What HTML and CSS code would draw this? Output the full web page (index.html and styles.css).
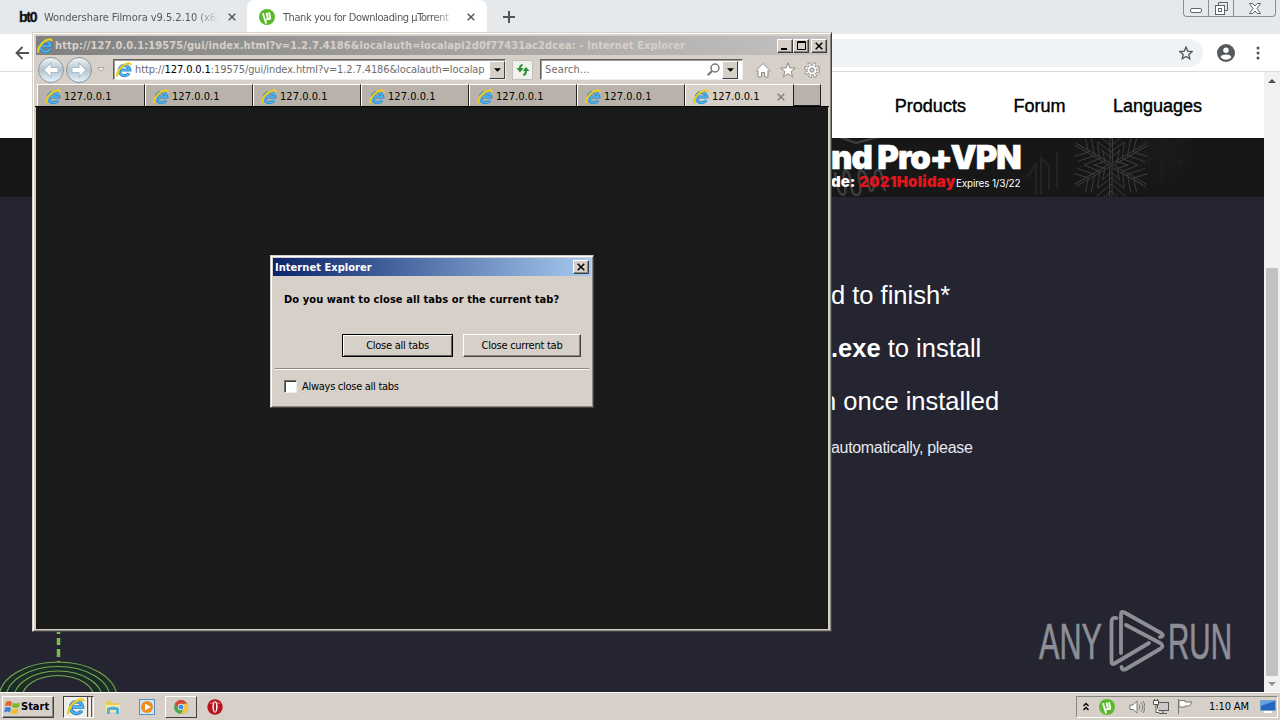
FILE: index.html
```html
<!DOCTYPE html>
<html lang="en">
<head>
    <meta charset="UTF-8">
    <meta name="viewport" content="width=device-width, initial-scale=1.0">
    <title>Thank you for Downloading µTorrent</title>
    <link rel="stylesheet" href="styles.css">
</head>
<body>
    <svg class="sprites" width="0" height="0">
        <symbol id="ie" viewBox="0 0 16 16">
            <path d="M13 11.200a5.200 5.200 0 1 1 .7-3.200H5" fill="none" stroke="#2583cc" stroke-width="3.200"/>
            <path d="M13 11.200a5.200 5.200 0 1 1 .7-3.200H5" fill="none" stroke="#55b8ee" stroke-width="1.600"/>
            <path d="M1.500 14.500C.2 11.500 3.500 5.500 8.300 2.700 11.500.9 14.800.6 14.600 3.200" fill="none" stroke="#efcb1d" stroke-width="2.200"/>
        </symbol>
        <symbol id="ut" viewBox="0 0 16 16">
            <circle cx="8" cy="8" r="8" fill="#5cb82c"/>
            <path d="M4 4.200l1.500 5.200c.6 1.900 3.600 1.500 3.200-.6L7.500 3.700M8.700 8.800c.5 2 3 1.500 2.500-.5L9.900 3.200M5.800 10l1.300 4.500" fill="none" stroke="#fff" stroke-width="1.800"/>
        </symbol>
        <symbol id="x" viewBox="0 0 8 8">
            <path d="M.7.7l6.600 6.600M7.300.7L.7 7.300" fill="none" stroke="currentColor" stroke-width="1.500"/>
        </symbol>
        <symbol id="down" viewBox="0 0 8 4">
            <path d="M0 0h8L4 4z" fill="currentColor"/>
        </symbol>
    </svg>

    <div class="desktop">
        <!-- Chrome -->
        <div class="chrome">
            <div class="tabstrip">
                <div class="tab tab-first">
                    <span class="bt-icon">bt0</span>
                    <span class="tab-title">Wondershare Filmora v9.5.2.10 (x64</span>
                    <svg class="tab-close"><use href="#x"/></svg>
                </div>
                <div class="tab tab-active">
                    <svg class="tab-icon"><use href="#ut"/></svg>
                    <span class="tab-title tab-title-active">Thank you for Downloading µTorrent</span>
                    <svg class="tab-close"><use href="#x"/></svg>
                </div>
                <svg class="tab-new" viewBox="0 0 12 12"><path d="M6 0v12M0 6h12" stroke="#505357" stroke-width="2"/></svg>
                <div class="win-controls">
                    <span class="wc wc-min"><svg width="12" height="5"><rect x=".5" y=".5" width="11" height="4" rx="1.500" fill="#fff" stroke="#5b6370"/></svg></span>
                    <span class="wc wc-max"><svg width="13" height="13" fill="none" stroke="#5b6370"><path d="M3.500 3V.5h9v8H10"/><rect x=".5" y="3.500" width="9" height="9" fill="#fff"/><rect x="3.500" y="6.500" width="3" height="3"/></svg></span>
                    <span class="wc wc-close"><svg width="12" height="11" fill="#fff" stroke="#5b6370"><path d="M.5.5h3.200L6 3 8.300.5h3.200L8 5.500l3.500 5H8.300L6 8l-2.300 2.500H.5l3.500-5z"/></svg></span>
                </div>
            </div>
            <div class="toolbar">
                <svg class="back" viewBox="0 0 14 14"><path d="M14 7H1.500M7.500 1L1.500 7l6 6" fill="none" stroke="#505357" stroke-width="1.800"/></svg>
                <div class="omnibox">
                    <svg width="14" height="14" viewBox="0 0 14 14"><path d="M7 1l1.700 4.100 4.500.4-3.400 2.900 1 4.400L7 10.500l-3.800 2.300 1-4.400L.8 5.500l4.500-.4z" fill="none" stroke="#505357" stroke-width="1.300"/></svg>
                </div>
                <svg class="avatar" viewBox="0 0 18 18"><circle cx="9" cy="9" r="9" fill="#55585c"/><circle cx="9" cy="6.300" r="2.700" fill="#fff"/><path d="M3.600 13c1.500-3.200 9.300-3.200 10.800 0-2.200 3.600-8.600 3.600-10.800 0z" fill="#fff"/></svg>
                <svg class="menu-dots" viewBox="0 0 4 14" fill="#505357"><circle cx="2" cy="2" r="1.500"/><circle cx="2" cy="7" r="1.500"/><circle cx="2" cy="12" r="1.500"/></svg>
            </div>
            <div class="viewport">
                <div class="page">
                    <div class="site-nav">
                        <span>Products</span>
                        <span>Forum</span>
                        <span>Languages</span>
                    </div>
                    <div class="promo">
                        <svg class="flakes" viewBox="0 0 433 59" fill="none" stroke="#3c3c3c">
                            <g id="flake" stroke-width="1">
                                <g id="arm"><path d="M279 27V-14M281.500 24V-14M280 20l-9-8M280 20l9-8M280 14l-13-10M280 14l13-10M280 8L266-4M280 8l14-12M280 1L269-9M280 1l11-10"/></g>
                                <use href="#arm" transform="rotate(60 280 27)"/>
                                <use href="#arm" transform="rotate(120 280 27)"/>
                                <use href="#arm" transform="rotate(180 280 27)"/>
                                <use href="#arm" transform="rotate(240 280 27)"/>
                                <use href="#arm" transform="rotate(300 280 27)"/>
                            </g>
                            <use href="#flake" transform="translate(135 -5) scale(.7)" opacity=".25"/>
                            <path d="M0-4l25 9L58-4M4 34q2 22 8 23c7-2-4-25 3-24s2 25 11 24-3-23 4-24 7 22 11 20 0-21 6-21 4 21 8 20" stroke-width="2.500"/>
                            <path d="M195 40l10-14v30M210 56V20l8 8v24M226 50V14" stroke-width="2" opacity=".35"/>
                        </svg>
                        <div class="promo-title">nd Pro+VPN</div>
                        <div class="promo-line"><b class="promo-code">de:</b><b class="promo-red">2021Holiday</b><span class="promo-exp">Expires 1/3/22</span></div>
                    </div>
                    <div class="hero">
                        <p class="step step-1">d to finish*</p>
                        <p class="step step-2"><b>.exe</b> to install</p>
                        <p class="step step-3">n once installed</p>
                        <p class="note">automatically, please</p>
                        <svg class="rings" viewBox="0 0 120 62" fill="none" stroke="#76a850" stroke-width="1.200">
                            <path d="M58.500 2v30" stroke="#7fb84c" stroke-width="3.500" stroke-dasharray="2 4 7 4 8 4"/>
                            <ellipse cx="58" cy="68" rx="59" ry="36" fill="#1c2c26"/>
                            <ellipse cx="58" cy="68" rx="52" ry="31.500"/>
                            <ellipse cx="58" cy="68" rx="44" ry="27"/>
                            <ellipse cx="58" cy="68" rx="36" ry="22.500" fill="#242531"/>
                        </svg>
                        <svg class="watermark" viewBox="0 0 200 64">
                            <g fill="#8d8e96" stroke="#8d8e96" stroke-width=".7" font-family="Liberation Sans" font-size="50">
                                <text x="1" y="50" textLength="63" lengthAdjust="spacingAndGlyphs">ANY</text>
                                <text x="130" y="50" textLength="64" lengthAdjust="spacingAndGlyphs">RUN</text>
                            </g>
                            <g fill="none" stroke="#8d8e96" stroke-width="3.800" stroke-linecap="round" stroke-linejoin="round">
                                <path d="M78.500 9q-5-1-5 4v40q0 3 3 1.500L111 34"/>
                                <path d="M83 44V5.500q0-4 3.500-2L123 24q4 3-1 4"/>
                                <path d="M88 16l34 18q5 3 0 6L88 60q-4 2-4.500-2"/>
                            </g>
                        </svg>
                    </div>
                </div>
                <div class="scrollbar">
                    <svg class="sb-arrow sb-up"><use href="#down"/></svg>
                    <div class="sb-thumb"></div>
                    <svg class="sb-arrow sb-down"><use href="#down"/></svg>
                </div>
            </div>
        </div>

        <!-- Taskbar -->
        <div class="taskbar">
            <div class="start">
                <svg width="17" height="16" viewBox="0 0 17 16"><path d="M2 3q3-2 6 0L7 7.500q-3-2-6 0z" fill="#e8602c"/><path d="M9 3.500q3 2 7 0L15 8q-4 2-7 0z" fill="#7cb82f"/><path d="M1 9q3-2 6 0l-1 4.500q-3-2-6 0z" fill="#3a7fd8"/><path d="M8 9.500q3 2 6.500 0l-1 4.500q-4 2-6.500 0z" fill="#f4bd20"/></svg>
                <b>Start</b>
            </div>
            <div class="task task-ie">
                <svg width="18" height="18"><use href="#ie"/></svg>
                <i></i><i></i>
            </div>
            <svg class="ql ql-folder" viewBox="0 0 16 16"><path d="M1 2h5l1 2h7v9H1z" fill="#e8c95c"/><path d="M1 6h14v7H1z" fill="#f7e8a0"/><path d="M2 9q6-3 12 0v6h-3v-4H5v4H2z" fill="#56aedb"/></svg>
            <svg class="ql ql-media" viewBox="0 0 16 16"><rect x=".5" y=".5" width="15" height="15" fill="#cfe6f7" stroke="#5590c8"/><circle cx="8" cy="8" r="6" fill="#f08a1c"/><path d="M6 4.500L12 8l-6 3.500z" fill="#fff"/></svg>
            <div class="task task-chrome">
                <svg width="14" height="14" viewBox="0 0 14 14"><circle cx="7" cy="7" r="7" fill="#4aa850"/><path d="M1 3.500A7 7 0 0 1 13.100 3.700H7L4 8.700z" fill="#dc4437"/><path d="M13.100 3.700A7 7 0 0 1 6.600 14L10 8.800 9.500 3.700z" fill="#f9ca35"/><circle cx="7" cy="7" r="3.200" fill="#fff"/><circle cx="7" cy="7" r="2.500" fill="#4483e8"/></svg>
            </div>
            <svg class="ql ql-opera" viewBox="0 0 16 16"><circle cx="8" cy="8" r="7.700" fill="#b81420"/><path d="M2 5a7 5 0 0 1 12 0" fill="#dc5a5a"/><ellipse cx="8" cy="8" rx="2.600" ry="5.700" fill="#fff"/><ellipse cx="8" cy="8" rx="1.100" ry="4.700" fill="#b81420"/></svg>
            <div class="tray">
                <svg class="tray-more" viewBox="0 0 6 9"><path d="M.5 4L3 1.500 5.500 4M.5 8L3 5.500 5.500 8" fill="none" stroke="#000" stroke-width="1.400"/></svg>
                <svg class="tray-ut"><use href="#ut"/></svg>
                <svg class="tray-sound" viewBox="0 0 16 14" fill="none" stroke="#777"><path d="M1 5h3l4-4v12L4 9.500H1z" fill="#fff"/><path d="M10 4.500q2 2.500 0 5M12 2.500q4 4.500 0 9M14 1q4 6 0 12"/></svg>
                <svg class="tray-net" viewBox="0 0 16 15" fill="none" stroke="#555"><rect x="4.500" y="3.500" width="11" height="8" fill="#c9c9c9"/><path d="M6 14.500h8M10 12v2"/><path d="M.5 1.500h5v4h-5zM3 6v7.500h3M1.500 0v2M4.500 0v2" fill="#fff"/></svg>
                <svg class="tray-flag" viewBox="0 0 16 15" fill="#fff" stroke="#777"><path d="M1.500 0v15"/><path d="M2 1.500h6v1.500h7l-2.500 4H8V8H2z"/></svg>
                <span class="clock">1:10 AM</span>
                <svg class="tray-desk" viewBox="0 0 16 13"><rect x=".5" y=".5" width="15" height="10" fill="#2468c0" stroke="#7fa4cc"/><path d="M1 1h14L1 6z" fill="#5ba3e4"/><path d="M4 12h8" stroke="#fff" stroke-width="2"/></svg>
            </div>
        </div>

        <!-- Internet Explorer -->
        <div class="ie-window">
            <div class="ie-title">
                <svg class="ie-icon"><use href="#ie"/></svg>
                <span class="ie-caption">http://127.0.0.1:19575/gui/index.html?v=1.2.7.4186&amp;localauth=localapi2d0f77431ac2dcea: - Internet Explorer</span>
                <div class="ie-buttons">
                    <span class="cap-btn"><svg width="8" height="8"><path d="M0 7h6" stroke="#000" stroke-width="2"/></svg></span>
                    <span class="cap-btn"><svg width="9" height="9" fill="none" stroke="#000"><path d="M.5.5h8v8h-8zM0 1.500h9"/></svg></span>
                    <span class="cap-btn cap-close"><svg width="8" height="8"><use href="#x"/></svg></span>
                </div>
            </div>
            <div class="ie-toolbar">
                <span class="round"><svg viewBox="0 0 14 14"><path d="M7 1.500L1.500 7 7 12.500V9h5.500V5H7z" fill="#fff" stroke="#a9bcc8" stroke-width=".8"/></svg></span>
                <span class="round"><svg viewBox="0 0 14 14"><path d="M7 1.500L12.500 7 7 12.500V9H1.500V5H7z" fill="#fff" stroke="#a9bcc8" stroke-width=".8"/></svg></span>
                <svg class="history" viewBox="0 0 8 5"><path d="M.7.5h6.600L4 4.300z" fill="#eee" stroke="#aaa5a0"/></svg>
                <div class="field address">
                    <svg class="ie-icon"><use href="#ie"/></svg>
                    <span class="url">http://<em>127.0.0.1</em>:19575/gui/index.html?v=1.2.7.4186&amp;localauth=localap</span>
                    <span class="drop"><svg><use href="#down"/></svg></span>
                </div>
                <span class="refresh"><svg width="16" height="14" viewBox="0 0 16 14" fill="#31913a"><path d="M7.500 1Q4 1.500 4 5H1.500L5 9.500 8.500 5H6q0-2 2-2.500z"/><path d="M8.500 13q3.500-.5 3.500-5h2.500L11 4 7.500 8H10q0 2.500-2 3z"/></svg></span>
                <div class="field search">
                    <span class="placeholder">Search...</span>
                    <svg class="glass" viewBox="0 0 13 13" fill="none" stroke="#777" stroke-width="1.500"><circle cx="8" cy="5" r="4"/><path d="M5 8L.7 12.300" stroke-width="2"/></svg>
                    <span class="drop"><svg><use href="#down"/></svg></span>
                </div>
                <svg class="tool tool-home" viewBox="0 0 16 16" fill="#fff" stroke="#8e8a86"><path d="M8 1.500l7 7-1 1-1-1V15H9.500v-4.500h-3V15H3V8.500l-1 1-1-1z"/></svg>
                <svg class="tool tool-star" viewBox="0 0 16 16" fill="#fff" stroke="#8e8a86"><path d="M8 .8l1.900 5.100 5.400.2-4.200 3.400 1.500 5.200L8 11.700l-4.600 3 1.500-5.200L.7 6.100l5.400-.2z"/></svg>
                <svg class="tool" viewBox="0 0 16 16" fill="none"><circle cx="8" cy="8" r="6.300" stroke="#8e8a86" stroke-width="3.200" stroke-dasharray="3 1.950"/><circle cx="8" cy="8" r="5" fill="#fff" stroke="#8e8a86"/><circle cx="8" cy="8" r="5.800" stroke="#fff" stroke-width="2.200" stroke-dasharray="1.800 2.755" stroke-dashoffset="-.5"/><circle cx="8" cy="8" r="2.200" fill="#d4cfc9" stroke="#8e8a86"/></svg>
            </div>
            <div class="ie-tabs">
                <div class="ie-tab"><svg class="ie-icon"><use href="#ie"/></svg><span>127.0.0.1</span></div>
                <div class="ie-tab"><svg class="ie-icon"><use href="#ie"/></svg><span>127.0.0.1</span></div>
                <div class="ie-tab"><svg class="ie-icon"><use href="#ie"/></svg><span>127.0.0.1</span></div>
                <div class="ie-tab"><svg class="ie-icon"><use href="#ie"/></svg><span>127.0.0.1</span></div>
                <div class="ie-tab"><svg class="ie-icon"><use href="#ie"/></svg><span>127.0.0.1</span></div>
                <div class="ie-tab"><svg class="ie-icon"><use href="#ie"/></svg><span>127.0.0.1</span></div>
                <div class="ie-tab ie-current"><svg class="ie-icon"><use href="#ie"/></svg><span>127.0.0.1</span><svg class="ie-x"><use href="#x"/></svg></div>
                <div class="ie-newtab"></div>
            </div>
            <div class="ie-page"></div>
        </div>

        <!-- Dialog -->
        <div class="dialog">
            <div class="dialog-title">
                <b>Internet Explorer</b>
                <span class="cap-btn"><svg width="8" height="8"><use href="#x"/></svg></span>
            </div>
            <p class="question">Do you want to close all tabs or the current tab?</p>
            <div class="dialog-actions">
                <button class="btn btn-default"><span>Close all tabs</span></button>
                <button class="btn btn-current"><span>Close current tab</span></button>
            </div>
            <div class="dialog-footer">
                <span class="checkbox"></span>
                <span class="always">Always close all tabs</span>
            </div>
        </div>
    </div>
</body>
</html>
```
FILE: styles.css
```css
* {
    margin: 0;
    padding: 0;
    box-sizing: border-box;
}

body {
    overflow: hidden;
    font-family: "DejaVu Sans Condensed", "DejaVu Sans", sans-serif;
    font-stretch: condensed;
    font-size: 11px;
    color: #000;
}

svg {
    display: block;
    flex: none;
}

span, b, p {
    white-space: nowrap;
}

.sprites {
    position: absolute;
}

.desktop {
    position: relative;
    width: 1280px;
    height: 720px;
    overflow: hidden;
    display: flex;
    flex-direction: column;
}

/* Chrome window */
.chrome {
    flex: 1;
    min-height: 0;
    display: flex;
    flex-direction: column;
}

.tabstrip {
    height: 34px;
    display: flex;
    background: #e5e9ec;
}

.tab {
    display: flex;
    align-items: center;
    height: 34px;
    color: #55585c;
}

.tab-first {
    width: 247px;
    padding-left: 19px;
}

.tab-active {
    width: 240px;
    padding-left: 12px;
    background: #fff;
    border-radius: 8px 8px 0 0;
}

.bt-icon {
    width: 25px;
    font: bold 14px "Liberation Sans", sans-serif;
    letter-spacing: -1.2px;
    color: #111;
    -webkit-text-stroke: 0.3px #111;
}

.tab-icon {
    width: 16px;
    height: 16px;
    margin-right: 8px;
}

.tab-title {
    width: 175px;
    overflow: hidden;
    letter-spacing: -0.05px;
    -webkit-mask-image: linear-gradient(to right, #000 150px, transparent 175px);
    mask-image: linear-gradient(to right, #000 150px, transparent 175px);
}

.tab-title-active {
    letter-spacing: -0.42px;
}

.tab-close {
    width: 8px;
    height: 8px;
    margin-left: 9px;
}

.tab-new {
    width: 12px;
    height: 12px;
    margin: 11px 0 0 16px;
}

.win-controls {
    display: flex;
    width: 93px;
    height: 17px;
    margin-left: auto;
    margin-right: 4px;
    border: 1px solid #8b8f94;
    border-top: 0;
    border-radius: 0 0 4px 4px;
}

.wc {
    display: flex;
    justify-content: center;
    width: 25px;
    padding-top: 2px;
    border-right: 1px solid #8b8f94;
}

.wc-min {
    padding-top: 8px;
}

.wc-close {
    flex: 1;
    border-right: 0;
    padding-top: 3px;
}

.toolbar {
    height: 38px;
    display: flex;
    align-items: center;
    background: #fff;
    border-bottom: 1px solid #d8dadc;
}

.back {
    width: 14px;
    height: 14px;
    margin-left: 15px;
}

.omnibox {
    width: 1073px;
    height: 28px;
    margin-left: 101px;
    padding-right: 10px;
    display: flex;
    align-items: center;
    justify-content: flex-end;
    background: #f0f3f5;
    border-radius: 14px;
}

.avatar {
    width: 18px;
    height: 18px;
    margin-left: 14px;
}

.menu-dots {
    width: 4px;
    height: 14px;
    margin-left: 21px;
}

.viewport {
    flex: 1;
    min-height: 0;
    display: flex;
}

.page {
    width: 1264px;
    display: flex;
    flex-direction: column;
}

.site-nav {
    height: 66px;
    padding: 2px 62px 0 0;
    display: flex;
    justify-content: flex-end;
    align-items: center;
    gap: 47.5px;
    background: #fff;
    font: 18px "Liberation Sans", sans-serif;
    -webkit-text-stroke: 0.4px #000;
}

.promo {
    position: relative;
    height: 59px;
    padding: 2px 0 0 831px;
    overflow: hidden;
    background: #171717;
    color: #fff;
    font-family: "Inter", "Liberation Sans", sans-serif;
    font-stretch: normal;
}

.flakes {
    position: absolute;
    left: 831px;
    top: 0;
    width: 433px;
    height: 59px;
}

.promo-title {
    position: relative;
    height: 34px;
    line-height: 34px;
    font-size: 33px;
    font-weight: 900;
    letter-spacing: -1px;
    -webkit-text-stroke: 0.6px #fff;
}

.promo-line {
    position: relative;
    display: flex;
    align-items: baseline;
    height: 16px;
    line-height: 16px;
    font-size: 15px;
}

.promo-code,
.promo-red {
    font-weight: 900;
}

.promo-code {
    width: 28px;
}

.promo-red {
    width: 97px;
    color: #e0161c;
    letter-spacing: 0.2px;
}

.promo-exp {
    font-size: 10px;
    letter-spacing: -0.2px;
}

.hero {
    position: relative;
    flex: 1;
    padding: 82px 0 0 831px;
    background: #242531;
    color: #fff;
    font-family: "Liberation Sans", sans-serif;
}

.step {
    height: 53px;
    line-height: 32px;
    font-size: 25.5px;
}

.step-3 {
    margin-left: -9px;
    height: 44px;
}

.note {
    font-size: 16px;
    line-height: 38px;
    letter-spacing: -0.32px;
    color: #e8e8ee;
}

.rings {
    position: absolute;
    left: 0;
    bottom: 0;
    width: 120px;
    height: 62px;
}

.watermark {
    position: absolute;
    left: 1038px;
    bottom: 19px;
    width: 200px;
    height: 64px;
}

.scrollbar {
    width: 16px;
    display: flex;
    flex-direction: column;
    align-items: center;
    background: #f1f1f1;
}

.sb-arrow {
    width: 8px;
    height: 4px;
    color: #505050;
}

.sb-up {
    margin-top: 7px;
    transform: rotate(180deg);
}

.sb-thumb {
    width: 12px;
    height: 408px;
    margin-top: 185px;
    background: #c1c1c1;
}

.sb-down {
    margin-top: 6px;
    color: #909090;
}

/* Taskbar */
.taskbar {
    height: 28px;
    display: flex;
    align-items: center;
    background: #d6d0c9;
    border-top: 1px solid #fff;
}

.start {
    display: flex;
    align-items: center;
    width: 52px;
    height: 22px;
    margin-left: 2px;
    padding-left: 1px;
    border: 1px solid;
    border-color: #fff #404040 #404040 #fff;
    box-shadow: inset -1px -1px #8a8680;
}

.task {
    display: flex;
    align-items: center;
    height: 22px;
    border: 1px solid;
    border-color: #fff #404040 #404040 #fff;
}

.task-ie {
    width: 31px;
    margin-left: 9px;
    padding-left: 3px;
    gap: 2px;
    background: #f0eeeb;
    border-color: #404040 #fff #fff #404040;
}

.task-ie i {
    width: 2px;
    height: 20px;
    background: #d6d0c9;
    border-left: 1px solid #555;
}

.ql {
    width: 16px;
    height: 16px;
}

.ql-folder {
    margin-left: 11px;
}

.ql-media {
    margin-left: 18px;
}

.task-chrome {
    width: 32px;
    margin-left: 10px;
    justify-content: center;
}

.ql-opera {
    margin-left: 10px;
}

.tray {
    display: flex;
    align-items: center;
    width: 202px;
    height: 22px;
    margin-left: auto;
    margin-right: 2px;
    border: 1px solid;
    border-color: #8a8680 #fff #fff #8a8680;
}

.tray-more {
    width: 6px;
    height: 9px;
    margin-left: 6px;
}

.tray-ut {
    width: 16px;
    height: 16px;
    margin-left: 10px;
}

.tray-sound {
    width: 16px;
    height: 14px;
    margin-left: 14px;
}

.tray-net {
    width: 16px;
    height: 15px;
    margin-left: 8px;
}

.tray-flag {
    width: 16px;
    height: 15px;
    margin-left: 8px;
}

.clock {
    width: 51px;
    margin-left: 16px;
    letter-spacing: -0.1px;
}

.tray-desk {
    width: 16px;
    height: 13px;
}

/* Internet Explorer window */
.ie-window {
    position: absolute;
    left: 32px;
    top: 32px;
    width: 800px;
    height: 600px;
    padding: 2px;
    display: flex;
    flex-direction: column;
    background: #d6d0c9;
    border: 1px solid;
    border-color: #d6d0c9 #404040 #404040 #d6d0c9;
    box-shadow: inset 1px 1px #fff, inset -1px -1px #8a8680;
}

.ie-icon {
    width: 16px;
    height: 16px;
}

.ie-title {
    height: 19px;
    margin: 1px 1px 0;
    display: flex;
    align-items: center;
    padding-left: 1px;
    background: linear-gradient(to right, #808080, #c4c2c0);
    color: #d6d0c9;
    font-weight: bold;
}

.ie-caption {
    margin-left: 2px;
    letter-spacing: 0.11px;
}

.ie-buttons {
    display: flex;
    margin-left: auto;
    margin-right: 1px;
}

.cap-btn {
    display: flex;
    align-items: center;
    justify-content: center;
    width: 16px;
    height: 14px;
    color: #000;
    background: #d6d0c9;
    border: 1px solid;
    border-color: #fff #404040 #404040 #fff;
    box-shadow: inset -1px -1px #8a8680;
}

.cap-close {
    margin-left: 2px;
}

.ie-toolbar {
    height: 29px;
    display: flex;
    align-items: center;
    padding-left: 3px;
}

.round {
    display: flex;
    align-items: center;
    justify-content: center;
    width: 26px;
    height: 26px;
    margin-right: 2px;
    border: 1.5px solid #8d979d;
    border-radius: 50%;
    background: linear-gradient(#f2f5f7, #b4c4ce 50%, #e6f4fa);
}

.round svg {
    width: 18px;
    height: 18px;
}

.history {
    width: 8px;
    height: 5px;
    margin-left: 3px;
}

.field {
    display: flex;
    align-items: center;
    height: 21px;
    background: #fff;
    border: 1px solid;
    border-color: #606060 #eee #eee #606060;
    box-shadow: inset 1px 1px #a09c98;
    color: #6d6d6d;
}

.address {
    width: 393px;
    margin-left: 8px;
    padding-left: 2px;
}

.url {
    margin-left: 3px;
    letter-spacing: -0.11px;
}

.url em {
    font-style: normal;
    color: #000;
}

.drop {
    display: flex;
    align-items: center;
    justify-content: center;
    flex: none;
    width: 16px;
    height: 18px;
    margin-left: auto;
    color: #000;
    background: #d6d0c9;
    border: 1px solid;
    border-color: #fff #404040 #404040 #fff;
}

.drop svg {
    width: 7px;
    height: 4px;
}

.refresh {
    display: flex;
    align-items: center;
    justify-content: center;
    width: 21px;
    height: 20px;
    margin-left: 6px;
    background: #f1f2ee;
    border: 1px solid #c3c0bb;
}

.search {
    width: 203px;
    margin-left: 7px;
    padding: 0 4px;
}

.placeholder {
    letter-spacing: 0.15px;
}

.glass {
    width: 13px;
    height: 13px;
    margin-left: auto;
}

.search .drop {
    margin-left: 2px;
}

.tool {
    width: 16px;
    height: 16px;
}

.tool-home {
    margin-left: 12px;
}

.tool-star {
    margin: 0 8px 0 9px;
}

.ie-tabs {
    height: 23px;
    display: flex;
    padding-left: 2px;
    border-bottom: 1px solid #000;
}

.ie-tab {
    display: flex;
    align-items: center;
    width: 108px;
    padding: 2px 0 0 7px;
    background: #b9b2aa;
    border-top: 1px solid #fff;
    border-left: 1px solid #fff;
    border-right: 1px solid #202020;
}

.ie-tab span {
    margin-left: 3px;
    letter-spacing: 0.05px;
}

.ie-current {
    background: #d6d0c9;
    border-right: 0;
}

.ie-x {
    width: 8px;
    height: 8px;
    margin-left: 17px;
    color: #88827c;
}

.ie-newtab {
    width: 28px;
    background: #b9b2aa;
    border: 1px solid;
    border-color: #fff #202020 #202020 #202020;
}

.ie-page {
    flex: 1;
    margin: 0 1px;
    background: #1a1a1a;
}

/* Dialog */
.dialog {
    position: absolute;
    left: 270px;
    top: 255px;
    width: 324px;
    height: 153px;
    padding: 3px;
    background: #d6d0c9;
    border: 1px solid;
    border-color: #d6d0c9 #404040 #404040 #d6d0c9;
    box-shadow: inset 1px 1px #fff, inset -1px -1px #8a8680;
}

.dialog-title {
    display: flex;
    align-items: center;
    justify-content: space-between;
    height: 18px;
    margin: -1px -1px 0;
    padding: 0 2px 0 2px;
    background: linear-gradient(to right, #0a246a, #a6caf0);
    color: #fff;
    letter-spacing: 0.05px;
}

.question {
    margin: 16px 0 0 10px;
    height: 15px;
    line-height: 15px;
    font-weight: bold;
    letter-spacing: 0.09px;
}

.dialog-actions {
    display: flex;
    gap: 10px;
    margin: 27px 0 0 68px;
}

.btn {
    height: 23px;
    font: inherit;
    font-stretch: condensed;
    letter-spacing: -0.25px;
    background: #d6d0c9;
    border: 1px solid;
    border-color: #fff #404040 #404040 #fff;
    box-shadow: inset -1px -1px #8a8680;
}

.btn-default {
    width: 111px;
    border-color: #000;
    box-shadow: inset 1px 1px #fff, inset -1px -1px #606060;
}

.btn-current {
    width: 118px;
}

.dialog-footer {
    display: flex;
    align-items: center;
    gap: 5px;
    height: 35px;
    margin: 11px 1px 0;
    padding-left: 9px;
    border-top: 1px solid #8a8680;
    box-shadow: inset 0 1px #fff;
}

.always {
    letter-spacing: -0.28px;
}

.checkbox {
    width: 13px;
    height: 13px;
    background: #fff;
    border: 1px solid;
    border-color: #707070 #eee #eee #707070;
    box-shadow: inset 1px 1px #404040;
}
```
